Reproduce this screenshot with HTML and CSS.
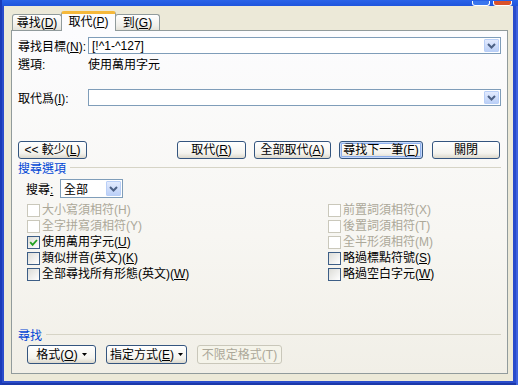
FILE: index.html
```html
<!DOCTYPE html>
<html lang="zh-Hant">
<head>
<meta charset="utf-8">
<title>尋找及取代</title>
<link rel="stylesheet" href="styles.css">
</head>
<body>
<div class="window">
  <div class="titlebar">
    <span class="tbtn help"></span>
    <span class="tbtn close"></span>
  </div>
  <div class="dialog">
    <div class="tabs">
      <div class="tab t1">尋找(<u>D</u>)</div>
      <div class="tab t2 active">取代(<u>P</u>)</div>
      <div class="tab t3">到(<u>G</u>)</div>
    </div>
    <div class="panel">
      <div class="field-row r1">
        <span class="flabel">尋找目標(<u>N</u>):</span>
        <div class="combo">
          <span class="ctext">[!^1-^127]</span>
          <span class="dd"><svg width="9" height="6" viewBox="0 0 9 6"><path d="M1 1 L4.5 4.5 L8 1" fill="none" stroke="#4d6185" stroke-width="2"/></svg></span>
        </div>
      </div>
      <div class="field-row r2">
        <span class="flabel">選項:</span>
        <span class="fvalue">使用萬用字元</span>
      </div>
      <div class="field-row r3">
        <span class="flabel">取代爲(<u>I</u>):</span>
        <div class="combo">
          <span class="ctext"></span>
          <span class="dd"><svg width="9" height="6" viewBox="0 0 9 6"><path d="M1 1 L4.5 4.5 L8 1" fill="none" stroke="#4d6185" stroke-width="2"/></svg></span>
        </div>
      </div>
      <div class="btn-row">
        <button class="btn b-less">&lt;&lt; 較少(<u>L</u>)</button>
        <button class="btn b-rep">取代(<u>R</u>)</button>
        <button class="btn b-all">全部取代(<u>A</u>)</button>
        <button class="btn b-next default">尋找下一筆(<u>F</u>)</button>
        <button class="btn b-close">關閉</button>
      </div>
      <div class="section-head sh1">
        <span class="sh-label">搜尋選項</span>
        <span class="sh-line"></span>
      </div>
      <div class="search-row">
        <span class="slabel">搜尋<u>:</u></span>
        <div class="select">
          <span class="ctext">全部</span>
          <span class="dd dd-s"><svg width="9" height="6" viewBox="0 0 9 6"><path d="M1 1 L4.5 4.5 L8 1" fill="none" stroke="#4d6185" stroke-width="2"/></svg></span>
        </div>
      </div>
      <div class="checks">
        <div class="chk disabled"><span class="box"></span>大小寫須相符(H)</div>
        <div class="chk disabled"><span class="box"></span>前置詞須相符(X)</div>
        <div class="chk disabled"><span class="box"></span>全字拼寫須相符(Y)</div>
        <div class="chk disabled"><span class="box"></span>後置詞須相符(T)</div>
        <div class="chk"><span class="box"><svg width="11" height="11" viewBox="0 0 11 11"><path d="M2.2 5.2 L4.6 7.8 L9 3" fill="none" stroke="#21a121" stroke-width="1.8"/></svg></span>使用萬用字元(<u>U</u>)</div>
        <div class="chk disabled"><span class="box"></span>全半形須相符(M)</div>
        <div class="chk"><span class="box"></span>類似拼音(英文)(<u>K</u>)</div>
        <div class="chk"><span class="box"></span>略過標點符號(<u>S</u>)</div>
        <div class="chk"><span class="box"></span>全部尋找所有形態(英文)(<u>W</u>)</div>
        <div class="chk"><span class="box"></span>略過空白字元(<u>W</u>)</div>
      </div>
      <div class="section-head sh2">
        <span class="sh-label">尋找</span>
        <span class="sh-line"></span>
      </div>
      <div class="fmt-row">
        <button class="btn b-fmt">格式(<u>O</u>) <svg class="tri" width="5" height="3" viewBox="0 0 5 3"><path d="M0 0 H5 L2.5 3 Z" fill="#000"/></svg></button>
        <button class="btn b-spec">指定方式(<u>E</u>) <svg class="tri" width="5" height="3" viewBox="0 0 5 3"><path d="M0 0 H5 L2.5 3 Z" fill="#000"/></svg></button>
        <button class="btn b-nofmt disabled">不限定格式(T)</button>
      </div>
    </div>
  </div>
</div>
</body>
</html>
```

FILE: styles.css
```css
* { box-sizing: border-box; }
html, body { margin: 0; padding: 0; background: #ffffff; }
body {
  font-family: "Liberation Sans", "Noto Sans CJK TC", sans-serif;
  font-size: 12px;
  color: #000;
  width: 520px;
  height: 390px;
  overflow: hidden;
}
u { text-decoration: underline; text-underline-offset: 1px; }

.window {
  width: 518px;
  height: 385px;
  background: #2a4ccb;
  border-left: 2px solid #1a3bb8;
  padding: 0 5px 4px 2px;
  display: flex;
  flex-direction: column;
  box-shadow: inset -2px 0 0 #3e63de, inset 0 -2px 0 #1c38a8;
}
.titlebar {
  height: 6px;
  background: linear-gradient(#2a63e8, #1e55dd);
  display: flex;
  justify-content: flex-end;
  align-items: flex-end;
  margin: 0 -5px 0 -2px;
  padding-right: 6px;
}
.tbtn {
  display: block;
  height: 5px;
  border: 1px solid #fff;
  border-top: none;
  border-radius: 0 0 3px 3px;
}
.tbtn.help { width: 18px; background: #3a76ee; margin-right: 3px; }
.tbtn.close { width: 19px; background: #d9522a; }

.dialog {
  flex: 1;
  background: #ece9d8;
  padding: 5px 5px 7px 7px;
  display: flex;
  flex-direction: column;
}

.tabs {
  height: 19px;
  display: flex;
  align-items: flex-end;
  padding-left: 1px;
  position: relative;
  z-index: 1;
}
.tab {
  height: 16px;
  border: 1px solid #919b9c;
  border-bottom: none;
  border-radius: 3px 3px 0 0;
  background: linear-gradient(#ffffff, #f0efea 70%, #e4e2d8);
  display: flex;
  align-items: center;
  justify-content: center;
  line-height: 14px;
  white-space: nowrap;
}
.t1 { width: 50px; }
.t2 { width: 55px; }
.t3 { width: 45px; margin-left: -1px; }
.tab.active {
  height: 20px;
  margin-bottom: -1px;
  background: #fcfcfe;
  border-top: 3px solid #f5b83a;
  padding-bottom: 2px;
  margin-left: -1px;
}

.panel {
  height: 344px;
  border: 1px solid #919b9c;
  background: linear-gradient(#fcfcfe, #f7f6f2 60%, #f1efe7);
  padding: 6px 6px 9px 6px;
  display: flex;
  flex-direction: column;
}

.field-row { display: flex; align-items: center; }
.r1, .r3 { height: 17px; }
.r2 { height: 14px; margin-top: 2px; }
.r3 { margin-top: 19px; }
.flabel { width: 70px; white-space: nowrap; }

.combo, .select {
  height: 17px;
  border: 1px solid #7f9db9;
  background: #fff;
  display: flex;
  align-items: center;
  padding: 1px;
}
.combo { flex: 1; }
.ctext { flex: 1; padding-left: 2px; white-space: nowrap; }
.dd {
  width: 15px;
  height: 13px;
  border: 1px solid #b9cff7;
  border-radius: 1px;
  background: linear-gradient(#e3ebfe, #bcd0f7);
  display: flex;
  align-items: center;
  justify-content: center;
}

.btn-row {
  display: flex;
  margin-top: 35px;
  height: 18px;
}
.btn {
  font: inherit;
  color: #000;
  height: 18px;
  border: 1px solid #34557f;
  border-radius: 3px;
  background: linear-gradient(#ffffff, #f4f3ee 70%, #dcd8cc);
  padding: 0;
  display: flex;
  align-items: center;
  justify-content: center;
  white-space: nowrap;
  line-height: 14px;
}
.b-less { width: 69px; }
.b-rep { width: 69px; margin-left: auto; }
.b-all { width: 77px; margin-left: 8px; }
.b-next { width: 84px; margin-left: 8px; }
.b-close { width: 68px; margin-left: 9px; margin-right: 1px; }
.btn.default { box-shadow: inset 0 0 0 1px #c6d9fa, inset 0 0 0 2px #8fb0ec; }

.section-head {
  height: 14px;
  display: flex;
  align-items: center;
}
.sh1 { margin-top: 1px; }
.sh2 { margin-top: 45px; }
.sh-label { color: #0046d5; white-space: nowrap; }
.sh-line {
  flex: 1;
  height: 1px;
  background: #d6d4c6;
  margin-left: 4px;
}

.search-row {
  margin-top: 5px;
  height: 19px;
  display: flex;
  align-items: center;
  padding-left: 8px;
}
.slabel { width: 34px; white-space: nowrap; }
.select { width: 63px; height: 19px; }
.dd-s { height: 15px; }

.checks {
  margin-top: 4px;
  padding-left: 9px;
  display: grid;
  grid-template-columns: 301px 1fr;
  grid-auto-rows: 16px;
}
.chk {
  display: flex;
  align-items: flex-start;
  line-height: 16px;
  white-space: nowrap;
}
.box {
  width: 13px;
  height: 13px;
  margin-top: 2px;
  margin-right: 2px;
  border: 1px solid #3d5e86;
  background: linear-gradient(135deg, #dcdcd7, #ffffff);
  display: flex;
  align-items: center;
  justify-content: center;
  flex: none;
}
.chk.disabled { color: #aca899; }
.chk.disabled .box { border-color: #cac8bb; background: #fff; }

.fmt-row {
  margin-top: 4px;
  padding-left: 9px;
  display: flex;
  height: 19px;
}
.fmt-row .btn { height: 19px; }
.b-fmt { width: 69px; }
.b-spec { width: 81px; margin-left: 10px; }
.b-nofmt { width: 85px; margin-left: 10px; }
.btn.disabled {
  color: #aca899;
  border-color: #c9c7ba;
  background: #f5f4ea;
}
.tri { margin-left: 4px; }
```
